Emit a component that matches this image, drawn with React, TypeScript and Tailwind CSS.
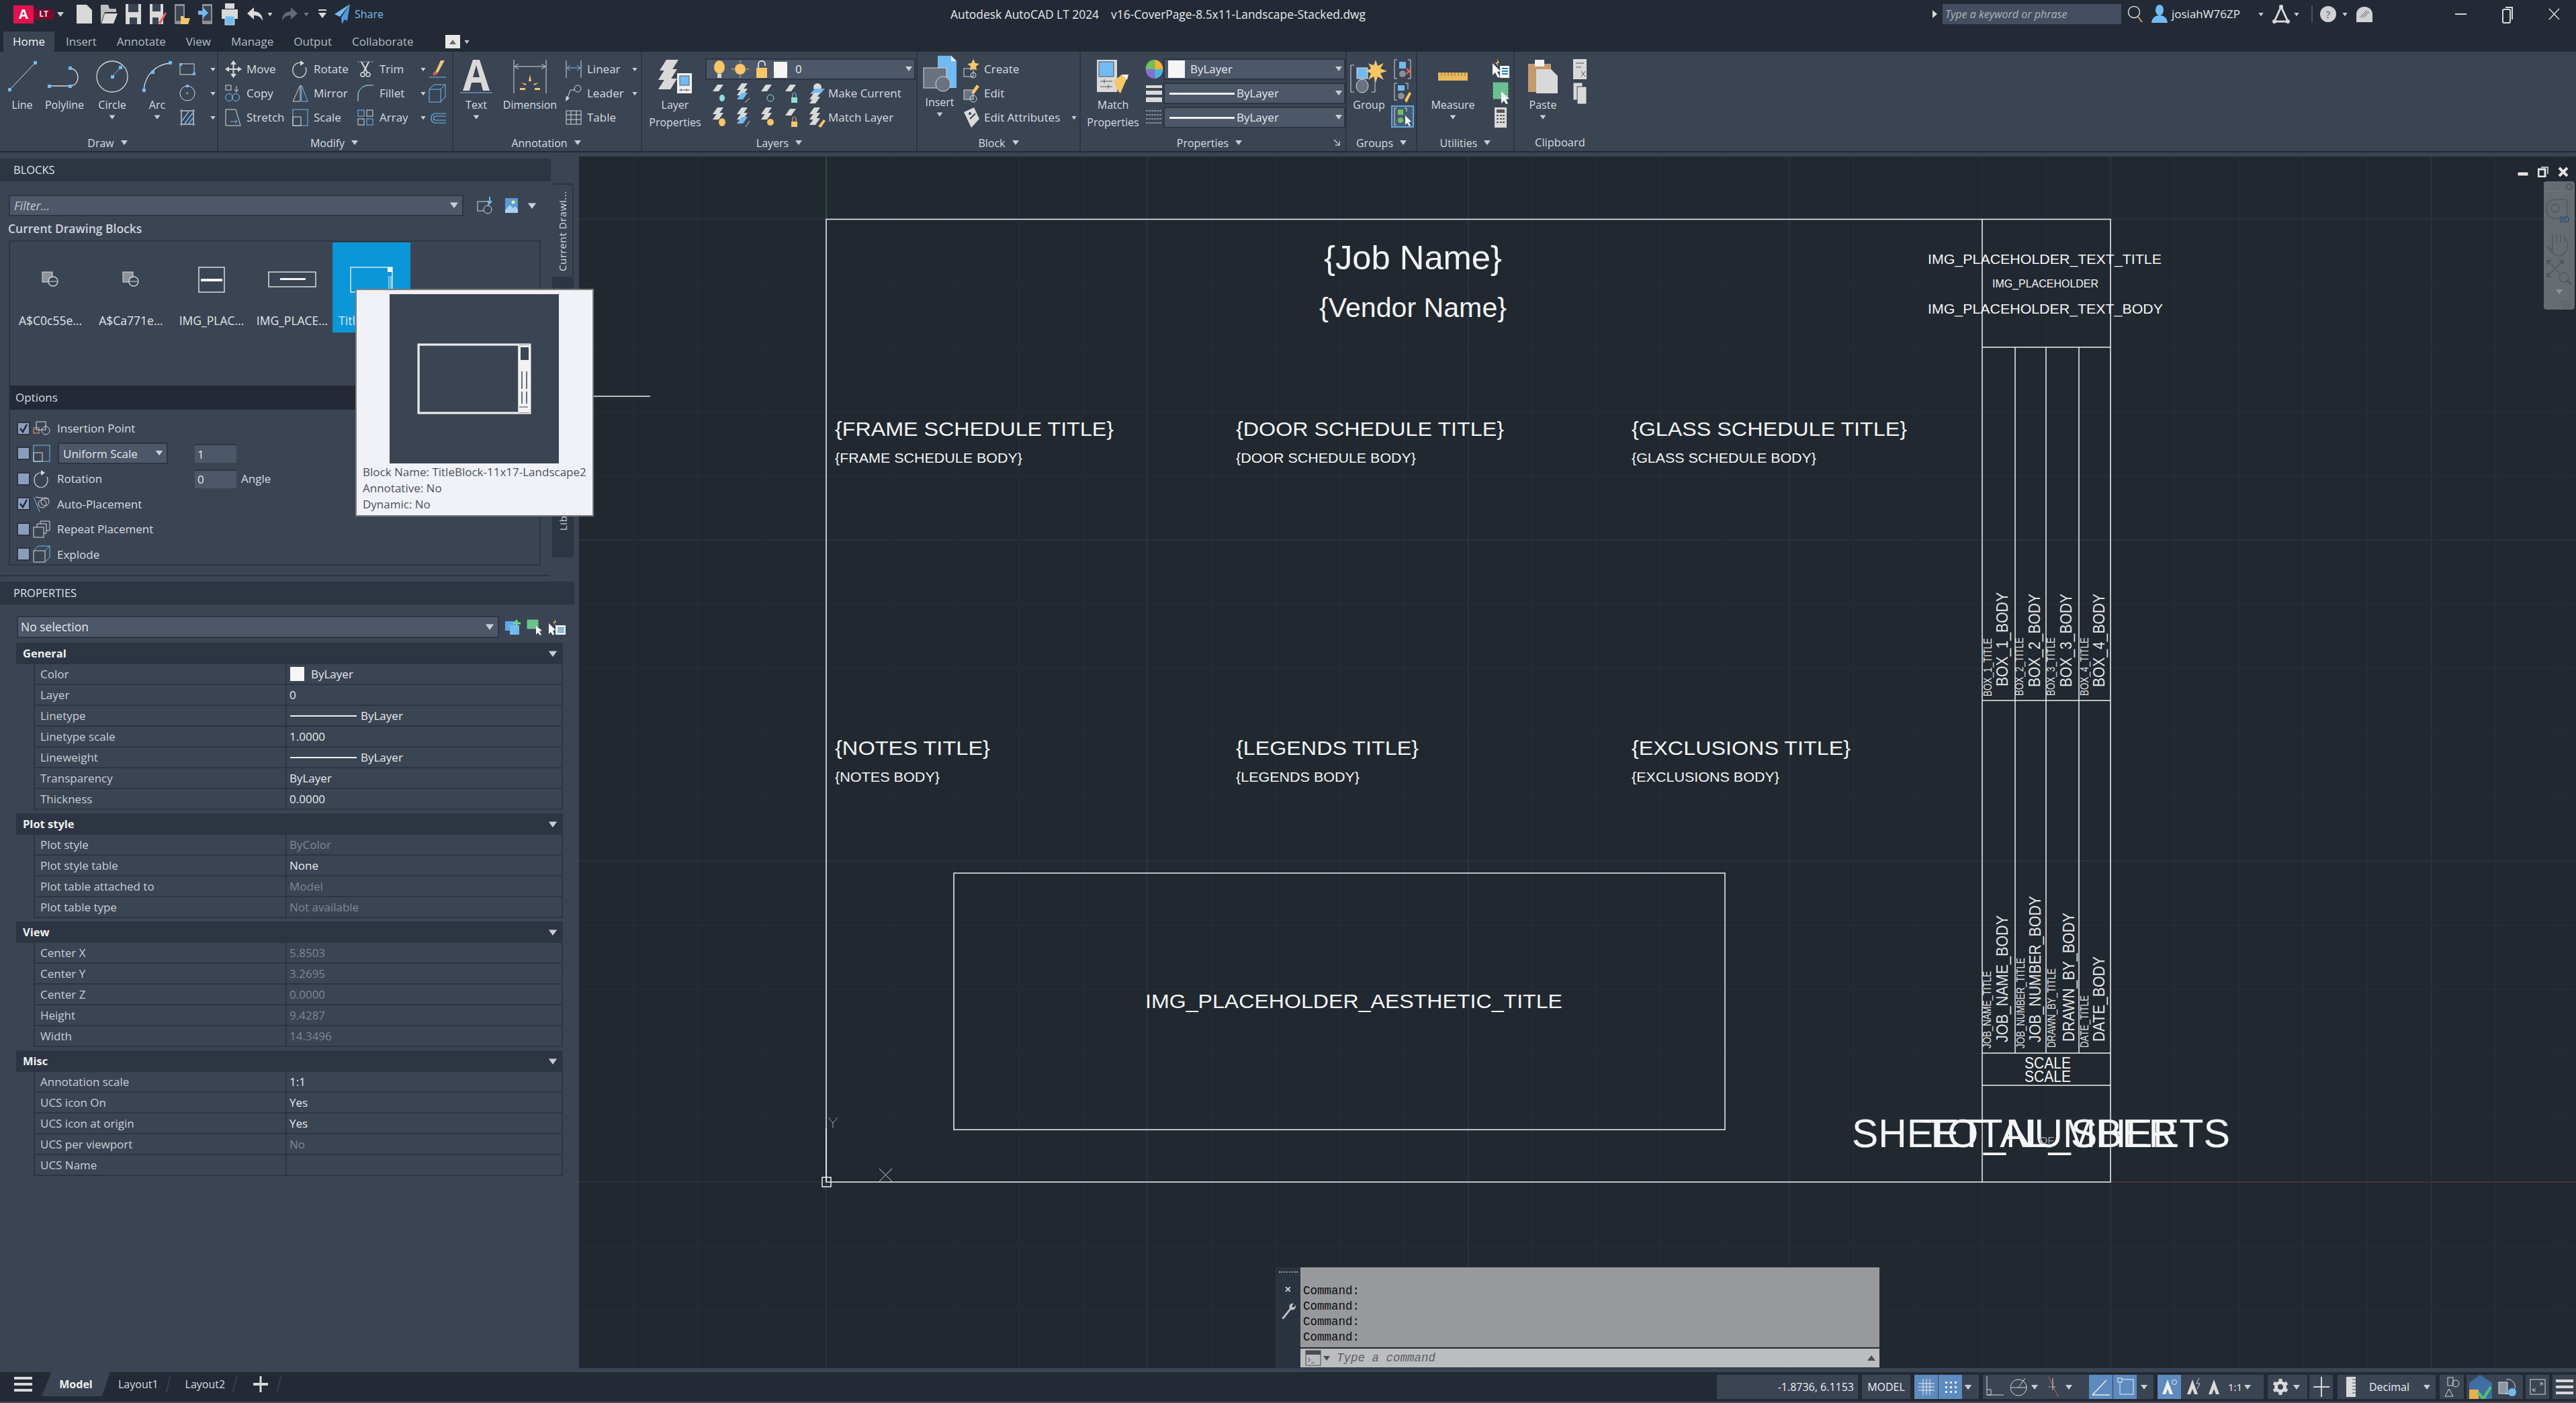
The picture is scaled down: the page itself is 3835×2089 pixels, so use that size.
import type { ReactNode } from "react"

const G = "#d9d9d9"
const B = "#72bbf2"
const Y = "#f6c667"

function Ic({ w, h, children, className }: { w: number; h: number; children?: ReactNode; className?: string }) {
  return (
    <svg width={w} height={h} viewBox={`0 0 ${w} ${h}`} fill="none" className={className}>
      {children}
    </svg>
  )
}

function Arrow({ className }: { className?: string }) {
  return (
    <svg width="10" height="7" viewBox="0 0 10 7" className={className}>
      <polygon points="0,0 10,0 5,7" fill="#c9ced6" />
    </svg>
  )
}

// ---- quick access toolbar icons
const Sheet = ({ fill = G }: { fill?: string }) => <polygon points="1,2 16,2 24,10 24,30 1,30" fill={fill} />
const qat = [
  <Ic w={25} h={32} key="new"><Sheet /></Ic>,
  <Ic w={26} h={32} key="open"><polygon points="1,2 12,2 14,8 24,8 24,13 7,13 1,30" fill="#bdbdbd" /><polygon points="7,15 26,15 20,30 2,30" fill={G} /></Ic>,
  <Ic w={25} h={34} key="save"><rect x="1" y="2" width="23" height="30" fill={G} /><rect x="5" y="2" width="15" height="12" fill="#3b4453" /><rect x="7" y="22" width="11" height="10" fill="#3b4453" /></Ic>,
  <Ic w={26} h={34} key="saveas"><rect x="1" y="2" width="20" height="30" fill={G} /><rect x="5" y="2" width="12" height="11" fill="#3b4453" /><rect x="5" y="22" width="9" height="10" fill="#3b4453" /><path d="M14 30 L24 14 L26 16 L17 32 Z" fill="#e8655a" /></Ic>,
  <Ic w={24} h={34} key="cloudopen"><rect x="1" y="2" width="15" height="30" rx="1" fill="#8c8f94" /><rect x="3" y="5" width="11" height="22" fill="#3b4453" /><polygon points="10,20 14,20 16,23 24,23 21,32 10,32" fill={Y} /></Ic>,
  <Ic w={24} h={34} key="cloudsave"><rect x="7" y="2" width="15" height="30" rx="1" fill="#8c8f94" /><rect x="9" y="5" width="11" height="22" fill="#3b4453" /><polygon points="1,12 8,12 8,7 16,15 8,23 8,18 1,18" fill={B} /></Ic>,
  <Ic w={26} h={34} key="plot"><rect x="6" y="1" width="14" height="8" fill={G} /><rect x="1" y="10" width="24" height="14" fill={G} /><rect x="6" y="20" width="14" height="13" fill={B} stroke={G} /></Ic>,
]

function TitleBar() {
  return (
    <div className="flex h-[47px] items-center bg-[#232a35] pb-[5px]">
      <div className="relative ml-[20px] h-[27px] w-[60px]">
        <div className="absolute left-[30px] top-[6px] flex h-[15px] w-[30px] items-center justify-center bg-[#7c0a2e] text-[12px] font-bold leading-none text-[#f3d9e0]">LT</div>
        <div className="absolute left-0 top-0 flex h-[27px] w-[30px] items-center justify-center bg-[#e3114f] text-[20px] font-bold leading-none text-white">A</div>
      </div>
      <Arrow className="ml-[5px]" />
      <div className="ml-[18px] flex items-center gap-[11px]">
        {qat}
      </div>
      <Ic w={26} h={22} className="ml-[12px]"><path d="M11 1 L1 10 L11 19 V13 C17 13 21 15 24 21 C24 12 19 7 11 7 Z" fill={G} /></Ic>
      <Arrow className="ml-[4px] scale-75" />
      <Ic w={26} h={22} className="ml-[11px]"><path d="M15 1 L25 10 L15 19 V13 C9 13 5 15 2 21 C2 12 7 7 15 7 Z" fill="#636a75" /></Ic>
      <Arrow className="ml-[7px] scale-75 opacity-50" />
      <Ic w={14} h={16} className="ml-[12px]"><rect x="1" y="1" width="12" height="2" fill={G} /><polygon points="1,6 13,6 7,14" fill={G} /></Ic>
      <Ic w={25} h={32} className="ml-[10px]"><polygon points="24,1 1,16 9,20 24,1" fill={B} /><polygon points="24,1 11,21 12,31 16,24 20,26" fill="#4f9bdb" /></Ic>
      <span className="ml-[6px] w-[44px] text-[16px] text-[#7cbdf0]">Share</span>
      <div className="ml-[843px] w-[640px] whitespace-pre text-[17.4px] text-[#e6e9ed]">Autodesk AutoCAD LT 2024    v16-CoverPage-8.5x11-Landscape-Stacked.dwg</div>
      <svg width="7" height="12" viewBox="0 0 7 12" className="ml-[822px]"><polygon points="0,0 7,6 0,12" fill={G} /></svg>
      <div className="ml-[8px] flex h-[30px] w-[266px] items-center bg-[#454e60] pl-[4px] text-[16px] italic text-[#aeb4bd]">Type a keyword or phrase</div>
      <Ic w={24} h={28} className="ml-[9px]"><circle cx="10" cy="11" r="8.5" stroke={G} strokeWidth="1.5" /><line x1="16" y1="18" x2="22" y2="26" stroke="#d99a5b" strokeWidth="2" /></Ic>
      <Ic w={26} h={28} className="ml-[11px]"><ellipse cx="13" cy="8" rx="6" ry="8" fill={B} /><path d="M1 27 C2 18 8 16 13 16 C18 16 24 18 25 27 Z" fill={B} /></Ic>
      <span className="ml-[5px] w-[128px] text-[17px] text-[#e6e9ed]">josiahW76ZP</span>
      <Arrow className="scale-75" />
      <Ic w={26} h={30} className="ml-[12px]"><path d="M13 4 L3 26 M13 4 L23 26 M3 26 H23" stroke={G} strokeWidth="3" /><circle cx="13" cy="4" r="3" fill={G} /><circle cx="3" cy="26" r="3" fill={G} /><circle cx="23" cy="26" r="3" fill={G} /></Ic>
      <Arrow className="ml-[5px] scale-75" />
      <div className="ml-[17px] h-[26px] w-[2px] bg-[#4a5362]" />
      <div className="ml-[11px] flex h-[24px] w-[24px] items-center justify-center rounded-full bg-[#cfd1d4] text-[15px] text-[#555]">?</div>
      <Arrow className="ml-[8px] scale-75" />
      <Ic w={24} h={24} className="ml-[12px]"><path d="M12 1 C19 1 24 6 24 12 V24 H0 V12 C0 6 5 1 12 1 Z" fill="#cfd1d4" /><path d="M5 17 L15 7 M8 17 L18 7 M11 17 L19 9" stroke="#666" /></Ic>
      <div className="ml-[123px] h-[2px] w-[17px] bg-[#d5d7da]" />
      <Ic w={17} h={28} className="ml-[53px]"><rect x="1" y="7" width="11" height="20" rx="2" stroke={G} strokeWidth="2" /><path d="M5 4 H15 V22" stroke={G} strokeWidth="2" /></Ic>
      <Ic w={17} h={18} className="ml-[52px]"><path d="M1 1 L16 17 M16 1 L1 17" stroke={G} strokeWidth="1.5" /></Ic>
    </div>
  )
}

function Tabs() {
  const rest = ["Insert", "Annotate", "View", "Manage", "Output", "Collaborate"]
  return (
    <div className="flex h-[30px] items-stretch bg-[#232a35] text-[17px]">
      <div className="ml-[5px] flex w-[76px] items-center justify-center bg-[#3b4453] text-[#f0f2f4]">Home</div>
      <div className="ml-[17px] flex items-center gap-[30px] text-[#b4bbc5]">
        {rest.map((t) => <span key={t}>{t}</span>)}
      </div>
      <div className="ml-[47px] flex items-center">
        <div className="flex h-[20px] w-[22px] items-center justify-center bg-[#e8e8e8]"><svg width="10" height="7" viewBox="0 0 10 7"><polygon points="0,7 10,7 5,0" fill="#6a6a6a" /></svg></div>
        <Arrow className="ml-[5px] scale-75" />
      </div>
    </div>
  )
}

function Panel({ w, label, children, launcher, labelClass }: { w: string; label: string; children: ReactNode; launcher?: boolean; labelClass?: string }) {
  return (
    <div className={`relative flex h-full flex-col border-r-2 border-[#2d3542] ${w}`}>
      <div className="flex h-[123px] pt-[8px]">{children}</div>
      <div className={`flex h-[25px] items-center justify-center gap-[10px] text-[16px] text-[#d7dbe0] ${labelClass ?? ""}`}>
        <span>{label}</span>
        <Arrow />
      </div>
      {launcher && (
        <svg width="10" height="10" viewBox="0 0 10 10" className="absolute bottom-[8px] right-[8px]"><path d="M1 1 L9 9 M9 3 V9 H3" stroke="#c9ced6" strokeWidth="1.5" /></svg>
      )}
    </div>
  )
}

function Large({ w, icon, label, arrow }: { w: string; icon: ReactNode; label: string[]; arrow?: boolean }) {
  return (
    <div className={`flex flex-col items-center ${w}`}>
      <div className="flex h-[58px] items-center justify-center">{icon}</div>
      {label.map((l) => (
        <span key={l} className="whitespace-nowrap text-[16px] leading-[26px] text-[#d7dbe0]">{l}</span>
      ))}
      {arrow && <Arrow className="mt-[2px] scale-90" />}
    </div>
  )
}

function Small({ icon, label, iconW, w, arrow }: { icon: ReactNode; label?: string; iconW: string; w?: string; arrow?: boolean }) {
  return (
    <div className={`flex h-[36px] items-center ${w ?? ""}`}>
      <div className={`flex shrink-0 items-center ${iconW}`}>{icon}</div>
      {label && <span className="whitespace-nowrap text-[17px] text-[#d7dbe0]">{label}</span>}
      {arrow && <Arrow className="ml-auto scale-75" />}
    </div>
  )
}

const sq = (x: number, y: number, s = 5) => <rect x={x} y={y} width={s} height={s} fill={B} />

function Combo({ children, w }: { children: ReactNode; w: string }) {
  return (
    <div className={`relative flex h-[32px] items-center border-2 border-[#2d3542] bg-[#4c5769] text-[17px] text-[#e6e9ed] ${w}`}>
      {children}
      <Arrow className="absolute right-[3px] top-[10px]" />
    </div>
  )
}

const LayerSlab = ({ y = 0 }: { y?: number }) => <polygon points={`5,${y + 10} 12,${y} 21,${y} 14,${y + 10}`} fill={G} />

function DrawPanel() {
  return (
    <Panel w="w-[325px]" label="Draw" labelClass="pr-[3px]">
      <div className="flex pl-[4px]">
        <Large w="w-[58px]" label={["Line"]} icon={<Ic w={48} h={48}><line x1="6" y1="43" x2="43" y2="4" stroke={G} />{sq(3, 41)}{sq(41, 1)}</Ic>} />
        <Large w="w-[68px]" label={["Polyline"]} icon={<Ic w={52} h={34}><path d="M3 31 H34 C50 31 50 5 34 5" stroke={G} strokeWidth="1.3" />{sq(1, 29)}{sq(32, 29)}{sq(32, 2)}</Ic>} />
        <Large w="w-[74px]" label={["Circle"]} arrow icon={<Ic w={50} h={50}><circle cx="25" cy="25" r="23" stroke={G} strokeWidth="1.3" /><line x1="25" y1="25" x2="38" y2="11" stroke={B} />{sq(23, 23)}{sq(35, 9)}</Ic>} />
        <Large w="w-[60px]" label={["Arc"]} arrow icon={<Ic w={46} h={48}><path d="M3 44 C5 22 20 6 43 4" stroke={G} strokeWidth="1.3" />{sq(1, 42)}{sq(14, 15)}{sq(40, 1)}</Ic>} />
      </div>
      <div className="ml-[2px] flex w-[56px] flex-col">
        <Small iconW="w-[36px]" arrow icon={<Ic w={26} h={20}><rect x="2" y="2" width="21" height="16" stroke={G} />{sq(21, 15, 4)}{sq(1, 1, 4)}</Ic>} />
        <Small iconW="w-[36px]" arrow icon={<Ic w={26} h={26}><circle cx="13" cy="13" r="11" stroke={G} /><rect x="11" y="0" width="4" height="4" fill={B} /><rect x="11.5" y="11.5" width="2.5" height="2.5" fill={B} /></Ic>} />
        <Small iconW="w-[36px]" arrow icon={<Ic w={26} h={26}><rect x="4" y="3" width="18" height="20" stroke={G} /><path d="M5 18 L15 4 M9 22 L21 6 M15 22 L21 14" stroke={B} strokeWidth="1.5" /><path d="M1 3 H25 M1 23 H25 M4 0 V26 M22 0 V26" stroke={G} strokeWidth="0.6" /></Ic>} />
      </div>
    </Panel>
  )
}

function ModifyPanel() {
  return (
    <Panel w="w-[350px]" label="Modify" labelClass="pr-[3px]">
      <div className="ml-[10px] flex w-[100px] flex-col">
        <Small iconW="w-[32px]" label="Move" icon={<Ic w={25} h={26}><path d="M12.5 1 V25 M1 13 H24" stroke={G} strokeWidth="2" /><polygon points="12.5,0 8,6 17,6" fill={G} /><polygon points="12.5,26 8,20 17,20" fill={G} /><polygon points="0,13 6,9 6,17" fill={G} /><polygon points="25,13 19,9 19,17" fill={G} /></Ic>} />
        <Small iconW="w-[32px]" label="Copy" icon={<Ic w={25} h={26}><rect x="1" y="1" width="8" height="7" stroke={G} /><circle cx="6" cy="19" r="5.5" stroke={B} /><circle cx="16" cy="19" r="5.5" stroke={B} /><path d="M17 2 V10 M14 7 L17 11 L20 7" stroke={G} /></Ic>} />
        <Small iconW="w-[32px]" label="Stretch" icon={<Ic w={25} h={26}><path d="M1 1 H16 L23 25 H1 Z" stroke={G} /><path d="M8 19 H18 M15 16 L18 19 L15 22" stroke={B} /></Ic>} />
      </div>
      <div className="flex w-[97px] flex-col">
        <Small iconW="w-[32px]" label="Rotate" icon={<Ic w={24} h={26}><path d="M14 4 A10 11 0 1 0 20 10" stroke={G} strokeWidth="1.3" /><polygon points="12,0 18,4 12,8" fill={G} /></Ic>} />
        <Small iconW="w-[32px]" label="Mirror" icon={<Ic w={24} h={26}><polygon points="1,25 12,1 12,25" stroke={G} /><polygon points="14,1 23,25 14,25" stroke={B} /></Ic>} />
        <Small iconW="w-[32px]" label="Scale" icon={<Ic w={24} h={26}><rect x="1" y="1" width="22" height="24" stroke={B} /><rect x="1" y="12" width="12" height="13" stroke={G} /></Ic>} />
      </div>
      <div className="flex w-[103px] flex-col">
        <Small iconW="w-[33px]" label="Trim" arrow icon={<Ic w={24} h={26}><line x1="0" y1="2" x2="24" y2="2" stroke={B} strokeDasharray="3 1" /><path d="M6 2 L15 18 M17 2 L9 18" stroke={G} strokeWidth="2" /><circle cx="8" cy="21" r="3" stroke={G} strokeWidth="1.5" /><circle cx="16" cy="21" r="3" stroke={G} strokeWidth="1.5" /></Ic>} />
        <Small iconW="w-[33px]" label="Fillet" arrow icon={<Ic w={24} h={26}><path d="M1 25 V16 C1 8 8 1 16 1 H24" stroke={G} /><path d="M1 16 C1 8 8 1 16 1" stroke={B} /></Ic>} />
        <Small iconW="w-[33px]" label="Array" arrow icon={<Ic w={24} h={24}><rect x="1" y="1" width="9" height="9" stroke={B} /><rect x="14" y="1" width="9" height="9" stroke={G} /><rect x="1" y="14" width="9" height="9" stroke={G} /><rect x="14" y="14" width="9" height="9" stroke={B} /></Ic>} />
      </div>
      <div className="ml-[3px] flex flex-col">
        <Small iconW="w-[26px]" icon={<Ic w={26} h={26}><polygon points="18,0 24,0 14,18 9,20" fill="#e9c77c" /><polygon points="9,16 14,20 8,23 6,20" fill="#dc5b4f" /><line x1="1" y1="25" x2="26" y2="25" stroke={B} /></Ic>} />
        <Small iconW="w-[26px]" icon={<Ic w={26} h={28}><path d="M1 8 H18 V27 H1 Z M1 8 L8 1 H25 V19 L18 27 M18 8 L25 1" stroke={B} /></Ic>} />
        <Small iconW="w-[26px]" icon={<Ic w={26} h={20}><path d="M26 4 H10 C2 4 2 18 10 18 H26 M26 8 H10 C7 8 7 14 10 14 H26" stroke={B} strokeWidth="1.2" /></Ic>} />
      </div>
    </Panel>
  )
}

function AnnotationPanel() {
  return (
    <Panel w="w-[281px]" label="Annotation" labelClass="pr-[3px]">
      <Large w="w-[68px]" label={["Text"]} arrow icon={<Ic w={48} h={50}><path d="M19 0 H29 L44 46 H34 L31 34 H17 L14 46 H4 Z M19 26 H29 L24 8 Z" fill={G} fillRule="evenodd" /><line x1="0" y1="49" x2="48" y2="49" stroke={B} /></Ic>} />
      <Large w="w-[92px]" label={["Dimension"]} icon={<Ic w={50} h={50}><path d="M1 0 V50 M49 0 V50" stroke={G} /><path d="M3 10 H47" stroke={G} /><path d="M8 6 L2 10 L8 14 M42 6 L48 10 L42 14" stroke={G} /><path d="M25 22 L23 32 H27 Z M12 34 L20 36 L18 38 Z M38 34 L30 36 L32 38 Z M10 42 H18 V45 H10 Z M32 42 H40 V45 H32 Z" fill={Y} /></Ic>} />
      <div className="ml-[7px] flex w-[108px] flex-col">
        <Small iconW="w-[32px]" label="Linear" arrow icon={<Ic w={24} h={26}><path d="M1 0 V26 M23 0 V26" stroke={G} /><path d="M3 11 H21 M7 7 L2 11 L7 15 M17 7 L22 11 L17 15" stroke={B} /></Ic>} />
        <Small iconW="w-[32px]" label="Leader" arrow icon={<Ic w={24} h={26}><circle cx="18" cy="6" r="5" stroke={G} /><path d="M14 8 L7 8 L2 22" stroke={G} /><polygon points="0,25 1,17 6,20" fill={G} /></Ic>} />
        <Small iconW="w-[32px]" label="Table" icon={<Ic w={24} h={22}><rect x="1" y="1" width="22" height="20" stroke={G} /><path d="M1 7 H23 M1 14 H23 M8 1 V21 M16 1 V21" stroke={G} /></Ic>} />
      </div>
    </Panel>
  )
}

const smallLayer = (glyph: ReactNode, k: string) => (
  <Ic w={30} h={30} key={k}><LayerSlab y={2} />{glyph}</Ic>
)

function LayersPanel() {
  return (
    <Panel w="w-[410px]" label="Layers">
      <div className="pl-[4px]">
        <Large w="w-[90px]" label={["Layer", "Properties"]} icon={<Ic w={50} h={50}><polygon points="12,0 30,0 20,16 2,16" fill={G} /><polygon points="10,14 28,14 18,30 0,30" fill={G} /><polygon points="10,28 28,28 18,44 0,44" fill={G} /><rect x="28" y="20" width="22" height="30" fill="#f0f0f0" /><rect x="32" y="24" width="14" height="14" fill={B} stroke="#555" /><path d="M34 43 V47 M42 43 V47 M31 45 H47" stroke="#555" /></Ic>} />
      </div>
      <div className="flex w-[313px] flex-col">
        <Combo w="w-[313px] mt-[2px] mb-[2px]">
          <Ic w={120} h={28} className="ml-[6px]"><ellipse cx="13" cy="11" rx="8" ry="10" fill={Y} /><rect x="10" y="21" width="6" height="6" fill={G} /><circle cx="44" cy="14" r="8" fill={Y} /><path d="M44 1 V5 M44 23 V27 M31 14 H35 M53 14 H57" stroke={Y} /><rect x="68" y="12" width="16" height="15" fill={Y} /><path d="M71 12 V7 C71 0 81 0 81 7 V9" stroke={G} strokeWidth="2" /><rect x="94" y="3" width="20" height="24" fill="#f5f5f5" /></Ic>
          <span className="ml-[6px]">0</span>
        </Combo>
        <div className="flex h-[36px] items-center pl-[6px]">
          {smallLayer(<ellipse cx="19" cy="22" rx="4" ry="5" fill="#8fe0e0" />, "a")}
          <span className="w-[6px]" />
          <Ic w={30} h={30}><LayerSlab y={0} /><LayerSlab y={8} /><polygon points="5,24 12,14 21,14 14,24" fill={B} /><path d="M17 29 L24 22" stroke={G} /></Ic>
          <span className="w-[6px]" />
          {smallLayer(<circle cx="19" cy="22" r="5" stroke="#8fe0e0" />, "c")}
          <span className="w-[6px]" />
          {smallLayer(<g><rect x="14" y="21" width="9" height="8" fill="#8fe0e0" /><path d="M16 21 V17 C16 13 21 13 21 17 V21" stroke="#8fe0e0" /></g>, "d")}
          <span className="w-[6px]" />
          <Ic w={30} h={30}><circle cx="17" cy="6" r="6" fill={G} /><polygon points="6,16 13,8 28,8 21,16" fill={B} /><LayerSlab y={14} /><LayerSlab y={20} /></Ic>
          <span className="ml-[3px] whitespace-nowrap text-[17px] text-[#d7dbe0]">Make Current</span>
        </div>
        <div className="flex h-[36px] items-center pl-[6px]">
          <Ic w={30} h={30}><LayerSlab y={0} /><LayerSlab y={8} /><ellipse cx="19" cy="22" rx="5" ry="6" fill={Y} /></Ic>
          <span className="w-[6px]" />
          <Ic w={30} h={30}><LayerSlab y={0} /><LayerSlab y={8} /><polygon points="5,24 12,14 21,14 14,24" fill={B} /><path d="M18 29 L24 20" stroke={G} /></Ic>
          <span className="w-[6px]" />
          <Ic w={30} h={30}><LayerSlab y={0} /><LayerSlab y={8} /><circle cx="19" cy="22" r="5" fill={Y} /></Ic>
          <span className="w-[6px]" />
          {smallLayer(<g><rect x="14" y="21" width="9" height="8" fill={Y} /><path d="M16 21 V17 C16 13 21 13 21 17 V21" stroke={Y} /></g>, "h")}
          <span className="w-[6px]" />
          <Ic w={30} h={30}><LayerSlab y={0} /><LayerSlab y={8} /><LayerSlab y={16} /><polygon points="18,28 26,18 29,20 22,30" fill={Y} /></Ic>
          <span className="ml-[3px] whitespace-nowrap text-[17px] text-[#d7dbe0]">Match Layer</span>
        </div>
      </div>
    </Panel>
  )
}

function BlockPanel() {
  return (
    <Panel w="w-[243px]" label="Block">
      <div className="-mt-[4px]">
        <Large w="w-[66px]" label={["Insert"]} arrow icon={<Ic w={50} h={54}><polygon points="22,0 42,0 50,8 50,48 22,48" fill={B} /><polygon points="42,0 50,8 42,8" fill="#f0f0f0" /><rect x="1" y="18" width="34" height="30" fill="#6a7280" stroke={G} /><circle cx="30" cy="42" r="11" fill="#6a7280" stroke={G} /></Ic>} />
      </div>
      <div className="ml-[2px] flex w-[170px] flex-col">
        <Small iconW="w-[31px]" label="Create" icon={<Ic w={24} h={30}><polygon points="15,0 18,6 24,7 19,11 20,17 15,14 10,17 11,11 6,7 12,6" fill={Y} /><rect x="1" y="14" width="14" height="12" stroke={G} /><circle cx="15" cy="24" r="4" stroke={G} /></Ic>} />
        <Small iconW="w-[31px]" label="Edit" icon={<Ic w={24} h={30}><rect x="1" y="10" width="14" height="14" fill="#6a7280" stroke={G} /><circle cx="15" cy="23" r="5" stroke={G} /><path d="M12 14 L20 2 L24 5 L16 16 Z" fill={Y} /></Ic>} />
        <Small iconW="w-[31px]" label="Edit Attributes" arrow icon={<Ic w={24} h={32}><path d="M1 8 L16 1 L24 18 L12 31 Z" fill={G} /><circle cx="10" cy="10" r="2" fill="#3b4453" /><path d="M10 18 L18 10" stroke="#3b4453" strokeWidth="2" /></Ic>} />
      </div>
    </Panel>
  )
}

function PropertiesPanel() {
  return (
    <Panel w="w-[396px]" label="Properties" launcher labelClass="pr-[11px]">
      <Large w="w-[96px]" label={["Match", "Properties"]} icon={<Ic w={50} h={50}><rect x="1" y="0" width="30" height="48" fill={G} /><rect x="4" y="3" width="22" height="22" fill={B} stroke="#555" /><path d="M6 32 H24 M6 40 H24 M12 29 V35 M18 37 V43" stroke="#555" /><polygon points="26,32 38,22 48,22 36,50 32,46" fill={Y} /><path d="M38 22 L48 22 L46 30" fill="#f0f0f0" /></Ic>} />
      <div className="flex flex-col">
        <div className="flex h-[36px] items-center">
          <svg width="27" height="28" viewBox="0 0 26 28" className="shrink-0">
            <path d="M13 14 L13 0 A13 14 0 0 1 26 14 Z" fill="#f2b23a" />
            <path d="M13 14 L26 14 A13 14 0 0 1 13 28 Z" fill="#4fb3d9" />
            <path d="M13 14 L13 28 A13 14 0 0 1 0 14 Z" fill="#8a6fd1" />
            <path d="M13 14 L0 14 A13 14 0 0 1 13 0 Z" fill="#6fbf5b" />
          </svg>
          <Combo w="w-[271px]"><span className="ml-[5px] h-[26px] w-[25px] bg-[#f5f5f5]" /><span className="ml-[8px]">ByLayer</span></Combo>
        </div>
        <div className="flex h-[36px] items-center">
          <Ic w={27} h={26} className="shrink-0"><rect x="1" y="1" width="24" height="4" fill={G} /><rect x="1" y="9" width="24" height="6" fill={G} /><rect x="1" y="19" width="24" height="7" fill={G} /></Ic>
          <Combo w="w-[271px]"><span className="ml-[7px] h-[3px] w-[97px] bg-[#f0f0f0]" /><span className="ml-[3px]">ByLayer</span></Combo>
        </div>
        <div className="flex h-[36px] items-center">
          <Ic w={27} h={26} className="shrink-0"><path d="M1 3 H25 M1 9 H25 M1 15 H25 M1 21 H25" stroke={G} strokeDasharray="3 1" /></Ic>
          <Combo w="w-[271px]"><span className="ml-[7px] h-[3px] w-[97px] bg-[#f0f0f0]" /><span className="ml-[3px]">ByLayer</span></Combo>
        </div>
      </div>
    </Panel>
  )
}

function GroupsPanel() {
  return (
    <Panel w="w-[105px]" label="Groups">
      <div className="ml-[2px]">
        <Large w="w-[62px]" label={["Group"]} icon={<Ic w={56} h={50}><path d="M6 8 H1 V48 H6 M32 8 H37 V48 H32" stroke={G} /><rect x="10" y="12" width="16" height="16" fill={B} stroke={G} /><ellipse cx="18" cy="39" rx="9" ry="10" fill="#6a7280" stroke={G} /><polygon points="38,0 41,9 50,5 45,13 55,17 45,20 50,30 41,25 38,34 35,25 27,30 31,20 23,17 31,13 27,5 35,9" fill={Y} /></Ic>} />
      </div>
      <div className="ml-[1px] flex w-[36px] flex-col items-center">
        <div className="flex h-[36px] items-center"><Ic w={26} h={30}><path d="M5 1 H1 V29 H5 M21 1 H25 V29 H21" stroke={G} /><rect x="8" y="4" width="10" height="10" fill={B} /><circle cx="13" cy="22" r="5" fill="#8a8f98" /><path d="M19 14 L26 22 M26 14 L19 22" stroke="#e8655a" strokeWidth="2" /></Ic></div>
        <div className="flex h-[36px] items-center"><Ic w={26} h={32}><path d="M5 1 H1 V26 H5 M17 1 H21 V10" stroke={G} /><rect x="6" y="4" width="10" height="8" fill={B} /><circle cx="11" cy="20" r="5" fill="#8a8f98" /><polygon points="16,26 23,14 26,16 19,30" fill={Y} /></Ic></div>
        <div className="flex h-[33px] w-[34px] items-center justify-center border-2 border-[#5fa8e0] bg-[#465a75]"><Ic w={26} h={28}><path d="M4 1 H1 V26 H4 M16 1 H19 V6" stroke={G} /><rect x="6" y="3" width="8" height="8" fill="#6fbf5b" /><circle cx="10" cy="19" r="4" fill="#6fbf5b" /><polygon points="17,12 17,26 20,23 23,28 25,27 22,22 26,21" fill="#f5f5f5" /></Ic></div>
      </div>
    </Panel>
  )
}

function UtilitiesPanel() {
  return (
    <Panel w="w-[145px]" label="Utilities">
      <Large w="w-[106px]" label={["Measure"]} arrow icon={<Ic w={44} h={12}><rect x="0" y="0" width="44" height="12" fill="#e8b95c" /><path d="M5 0 V5 M10 0 V5 M15 0 V5 M20 0 V5 M25 0 V5 M30 0 V5 M35 0 V5 M40 0 V5" stroke="#8a6a2a" /></Ic>} />
      <div className="flex w-[36px] flex-col items-center">
        <div className="flex h-[36px] items-center"><Ic w={26} h={30}><polygon points="1,6 1,24 5,20 9,28 12,26 8,19 13,18" fill="#f5f5f5" /><polygon points="8,0 11,6 8,6 10,11 5,5 8,5" fill={Y} /><rect x="12" y="10" width="14" height="18" fill="#f5f5f5" /><path d="M15 14 H24 M15 18 H24 M15 22 H24" stroke="#1d7ec2" strokeWidth="2" /></Ic></div>
        <div className="flex h-[36px] items-center"><Ic w={26} h={34}><rect x="2" y="1" width="22" height="24" fill="#6cbf8e" stroke="#6fdc8e" strokeDasharray="3 2" /><polygon points="14,14 14,32 18,28 21,33 24,32 21,26 26,25" fill="#f5f5f5" /></Ic></div>
        <div className="flex h-[36px] items-center"><Ic w={20} h={30}><rect x="1" y="0" width="18" height="30" fill={G} /><rect x="4" y="3" width="12" height="5" fill="#555" /><path d="M4 12 H7 M9 12 H12 M13 12 H16 M4 17 H7 M9 17 H12 M13 17 H16 M4 22 H7 M9 22 H12 M13 22 H16" stroke="#555" strokeWidth="2" /></Ic></div>
      </div>
    </Panel>
  )
}

function ClipboardPanel() {
  return (
    <div className="flex h-full w-[140px] flex-col">
      <div className="flex h-[123px] pt-[8px]">
        <Large w="w-[84px]" label={["Paste"]} arrow icon={<Ic w={44} h={50}><rect x="0" y="6" width="34" height="42" fill="#c49a6c" /><rect x="10" y="0" width="14" height="10" fill="#f0f0f0" /><polygon points="12,14 34,14 44,24 44,50 12,50" fill={G} /></Ic>} />
        <div className="ml-[3px] flex flex-col">
          <div className="flex h-[36px] items-center"><Ic w={20} h={30}><rect x="0" y="0" width="20" height="30" fill={G} /><path d="M4 6 H16 M4 12 H12" stroke="#555" /><path d="M12 18 L18 26 M18 18 L12 26" stroke="#555" /></Ic></div>
          <div className="flex h-[36px] items-center"><Ic w={20} h={32}><rect x="0" y="0" width="14" height="26" fill={G} stroke="#3b4453" /><rect x="6" y="6" width="14" height="26" fill={G} stroke="#3b4453" /></Ic></div>
        </div>
      </div>
      <div className="flex h-[25px] items-center pl-[30px] text-[16.5px] text-[#d7dbe0]">Clipboard</div>
    </div>
  )
}

function Ribbon() {
  return (
    <div className="flex h-[148px] bg-[#3b4453]">
      <DrawPanel />
      <ModifyPanel />
      <AnnotationPanel />
      <LayersPanel />
      <BlockPanel />
      <PropertiesPanel />
      <GroupsPanel />
      <UtilitiesPanel />
      <ClipboardPanel />
    </div>
  )
}

// ---- blocks palette
const smallBlock = (
  <Ic w={26} h={28}><rect x="1" y="3" width="15" height="15" fill="#8d939c" stroke={G} /><circle cx="17" cy="17" r="7" fill="#3b4453" stroke={G} strokeWidth="1.3" /><path d="M10 17 H24" stroke={G} /></Ic>
)

const blockItems = [
  { label: "A$C0c55e...", icon: smallBlock },
  { label: "A$Ca771e...", icon: smallBlock },
  { label: "IMG_PLAC...", icon: <Ic w={40} h={39}><rect x="1" y="1" width="38" height="37" stroke="#f5f5f5" strokeWidth="1.3" /><rect x="4" y="18" width="32" height="4" fill="#f5f5f5" /></Ic> },
  { label: "IMG_PLACE...", icon: <Ic w={72} h={24}><rect x="1" y="1" width="70" height="22" stroke="#f5f5f5" strokeWidth="1.3" /><rect x="18" y="10" width="38" height="3" fill="#f5f5f5" /></Ic> },
  { label: "TitleBlock-...", icon: <Ic w={64} h={39}><rect x="1" y="1" width="62" height="37" stroke="#f5f5f5" strokeWidth="1.3" /><rect x="56" y="1" width="7" height="7" fill="#f5f5f5" /><path d="M58 14 V38 M61 14 V38" stroke="#f5f5f5" /></Ic>, selected: true },
]

const checkOn = (
  <div className="flex h-[20px] w-[20px] shrink-0 items-center justify-center border-2 border-[#2d3542] bg-[#8a9dbc]"><svg width="14" height="14" viewBox="0 0 14 14"><path d="M2 7 L6 12 L12 1" stroke="#20262f" strokeWidth="2.4" fill="none" /></svg></div>
)
const checkOff = <div className="h-[20px] w-[20px] shrink-0 border-2 border-[#2d3542] bg-[#8a9dbc]" />

function OptionRow({ on, icon, label, children }: { on?: boolean; icon: ReactNode; label?: string; children?: ReactNode }) {
  return (
    <div className="flex h-[37.5px] items-center pl-[10px]">
      {on ? checkOn : checkOff}
      <div className="ml-[4px] flex w-[36px] shrink-0 items-center">{icon}</div>
      {label && <span className="text-[17px] text-[#d7dbe0]">{label}</span>}
      {children}
    </div>
  )
}

function SmallInput({ value, w }: { value: string; w: string }) {
  return <div className={`flex h-[28px] items-center border-t-2 border-[#2d3542] bg-[#4c5769] pl-[4px] text-[17px] text-[#e6e9ed] ${w}`}>{value}</div>
}

function BlocksPanel() {
  return (
    <div className="relative flex h-[622px]">
      <div className="w-[820px]">
        <div className="flex h-[34px] items-center rounded-t-[3px] bg-[#2d3542] pl-[20px] text-[16.5px] text-[#dde1e6]">BLOCKS</div>
        <div className="ml-[13px] mt-[20px] flex h-[32px] items-center">
          <div className="relative flex h-[32px] w-[677px] items-center border-2 border-[#2d3542] bg-[#4c5769] pl-[6px] text-[18px] italic text-[#c3c9d1]">
            Filter...
            <Arrow className="absolute right-[7px] top-[10px] scale-125" />
          </div>
          <Ic w={26} h={26} className="ml-[20px]"><rect x="1" y="7" width="16" height="14" stroke={G} /><circle cx="16" cy="19" r="6" stroke={G} fill="#3b4453" /><path d="M19 0 V9 M16 6 L19 10 L22 6" stroke={B} strokeWidth="2" /></Ic>
          <Ic w={19} h={22} className="ml-[16px]"><rect x="0" y="0" width="19" height="22" fill="#5c9ad1" /><circle cx="12" cy="6" r="2.5" fill="#f6e8a0" /><polygon points="0,18 7,10 12,15 15,12 19,17 19,22 0,22" fill="#a9d2f0" /></Ic>
          <Arrow className="ml-[16px] scale-125" />
        </div>
        <div className="flex h-[36px] items-center pl-[12px] text-[17.5px] font-semibold text-[#cfd4da]">Current Drawing Blocks</div>
        <div className="ml-[13px] h-[484px] w-[792px] border-2 border-[#2d3542]">
          <div className="flex h-[214px] items-start pt-[1px]">
            {blockItems.map((b) => (
              <div key={b.label} className={b.selected ? "flex h-[134px] w-[116px] flex-col items-center overflow-hidden bg-[#0a96d8]" : "flex h-[134px] w-[120px] flex-col items-center overflow-hidden"}>
                <div className="-mb-[6px] flex h-[110px] shrink-0 items-center justify-center">{b.icon}</div>
                <span className="whitespace-nowrap text-[17.5px] leading-[24px] text-[#e2e5e9]">{b.label}</span>
              </div>
            ))}
          </div>
          <div className="flex h-[36px] items-center bg-[#232a35] pl-[8px] text-[17px] text-[#d7dbe0]">Options</div>
          <div className="pt-[9px]">
            <OptionRow on label="Insertion Point" icon={<Ic w={26} h={24}><rect x="1" y="11" width="8" height="8" stroke="#e8a27a" /><rect x="5" y="2" width="14" height="12" stroke={G} /><circle cx="19" cy="15" r="6" stroke={G} /></Ic>} />
            <OptionRow icon={<Ic w={26} h={26}><rect x="1" y="1" width="24" height="24" stroke={B} /><rect x="1" y="12" width="13" height="13" stroke={G} /></Ic>}>
              <div className="relative ml-[1px] flex h-[32px] w-[164px] items-center border-2 border-[#2d3542] bg-[#4c5769] pl-[6px] text-[17px] text-[#e2e5e9]">
                Uniform Scale
                <Arrow className="absolute right-[6px] top-[10px] scale-110" />
              </div>
              <div className="ml-[40px]"><SmallInput value="1" w="w-[62px]" /></div>
            </OptionRow>
            <OptionRow icon={<Ic w={24} h={26}><path d="M14 4 A10 11 0 1 0 21 10" stroke={G} strokeWidth="1.2" /><polygon points="12,0 18,4 12,8" fill={G} /></Ic>}>
              <span className="w-[205px] text-[17px] text-[#d7dbe0]">Rotation</span>
              <SmallInput value="0" w="w-[62px]" />
              <span className="ml-[7px] text-[17px] text-[#d7dbe0]">Angle</span>
            </OptionRow>
            <OptionRow on label="Auto-Placement" icon={<Ic w={26} h={26}><path d="M1 3 L10 25" stroke={B} /><path d="M4 3 L24 6" stroke={G} /><circle cx="14" cy="13" r="6" stroke={G} /><circle cx="18" cy="10" r="6" stroke={G} /></Ic>} />
            <OptionRow label="Repeat Placement" icon={<Ic w={26} h={26}><rect x="1" y="10" width="15" height="15" stroke={G} /><path d="M6 10 V5 H20 V19 H16 M11 5 V1 H25 V15 H20" stroke={G} /></Ic>} />
            <OptionRow label="Explode" icon={<Ic w={26} h={26}><path d="M1 8 H18 V25 H1 Z" stroke={G} /><path d="M1 8 L8 1 H25 V18 L18 25 M18 8 L25 1" stroke={B} /></Ic>} />
          </div>
        </div>
      </div>
      <div className="ml-[2px] mt-[37px] flex w-[32px] flex-col">
        <div className="flex h-[139px] items-center justify-center rounded-r-[4px] border-r-2 border-t-2 border-[#2d3542] bg-[#3b4453]">
          <span className="rotate-180 whitespace-nowrap text-[15px] tracking-[0.6px] text-[#d7dbe0] [writing-mode:vertical-rl]">Current Drawi...</span>
        </div>
        <div className="flex h-[418px] items-end justify-center rounded-r-[4px] bg-[#2d3542] pb-[40px]">
          <span className="rotate-180 whitespace-nowrap text-[15px] tracking-[0.6px] text-[#c3c9d1] [writing-mode:vertical-rl]">Libraries</span>
        </div>
      </div>
      <div className="absolute bottom-0 left-0 h-[2px] w-[818px] bg-[#2d3542]" />
    </div>
  )
}

// ---- properties palette
type Row = { k: string; v?: string; dim?: boolean; line?: boolean; swatch?: boolean }
const sections: { title: string; rows: Row[] }[] = [
  {
    title: "General",
    rows: [
      { k: "Color", v: "ByLayer", swatch: true },
      { k: "Layer", v: "0" },
      { k: "Linetype", v: "ByLayer", line: true },
      { k: "Linetype scale", v: "1.0000" },
      { k: "Lineweight", v: "ByLayer", line: true },
      { k: "Transparency", v: "ByLayer" },
      { k: "Thickness", v: "0.0000" },
    ],
  },
  {
    title: "Plot style",
    rows: [
      { k: "Plot style", v: "ByColor", dim: true },
      { k: "Plot style table", v: "None" },
      { k: "Plot table attached to", v: "Model", dim: true },
      { k: "Plot table type", v: "Not available", dim: true },
    ],
  },
  {
    title: "View",
    rows: [
      { k: "Center X", v: "5.8503", dim: true },
      { k: "Center Y", v: "3.2695", dim: true },
      { k: "Center Z", v: "0.0000", dim: true },
      { k: "Height", v: "9.4287", dim: true },
      { k: "Width", v: "14.3496", dim: true },
    ],
  },
  {
    title: "Misc",
    rows: [
      { k: "Annotation scale", v: "1:1" },
      { k: "UCS icon On", v: "Yes" },
      { k: "UCS icon at origin", v: "Yes" },
      { k: "UCS per viewport", v: "No", dim: true },
      { k: "UCS Name" },
    ],
  },
]

function PropertiesPalette() {
  return (
    <div className="mt-[8px]">
      <div className="flex h-[34px] w-[855px] items-center rounded-t-[3px] bg-[#2d3542] pl-[20px] text-[16.5px] text-[#dde1e6]">PROPERTIES</div>
      <div className="ml-[25px] mt-[17px] flex h-[33px] items-center">
        <div className="relative flex h-[33px] w-[718px] items-center border-2 border-[#2d3542] bg-[#4c5769] pl-[4px] text-[17.5px] text-[#e6e9ed]">
          No selection
          <Arrow className="absolute right-[7px] top-[11px] scale-125" />
        </div>
        <Ic w={24} h={24} className="ml-[9px]"><rect x="0" y="3" width="15" height="14" fill="#5ea8e6" /><rect x="7" y="9" width="14" height="14" fill={B} /><path d="M17 1 V11 M12 6 H23" stroke="#6fdc8e" strokeWidth="3" /></Ic>
        <Ic w={24} h={24} className="ml-[8px]"><rect x="1" y="1" width="16" height="13" fill="#6cbf8e" stroke="#6fdc8e" strokeDasharray="2 1" /><polygon points="14,10 14,23 17,20 20,24 22,23 19,18 23,17" fill="#f5f5f5" /></Ic>
        <Ic w={26} h={24} className="ml-[8px]"><polygon points="1,6 1,22 4,19 7,24 9,22 7,17 11,16" fill="#f5f5f5" /><polygon points="10,0 12,5 9,5 12,10 7,4 10,4" fill={Y} /><rect x="11" y="9" width="15" height="14" fill="#f5f5f5" /><path d="M14 13 H24 M14 16 H24 M14 19 H24" stroke="#1d7ec2" strokeWidth="1.5" /></Ic>
      </div>
      <div className="ml-[24px] mt-[7px] flex w-[814px] flex-col gap-[5px]">
        {sections.map((s) => (
          <div key={s.title}>
            <div className="flex h-[32px] items-center justify-between bg-[#2d3542] px-[10px] text-[16.5px] font-bold text-[#eef0f2]">
              {s.title}
              <Arrow className="scale-125" />
            </div>
            {s.rows.map((r) => (
              <div key={r.k} className="ml-[26px] flex h-[31px] border-b-2 border-l-2 border-r-2 border-[#2d3542] text-[17px]">
                <div className="flex w-[375px] items-center border-r-2 border-[#2d3542] pl-[8px] text-[#c9ced6]">{r.k}</div>
                <div className={r.dim ? "flex items-center pl-[4px] text-[#7f8794]" : "flex items-center pl-[4px] text-[#e8eaee]"}>
                  {r.swatch && <span className="mr-[10px] ml-[1px] h-[21px] w-[21px] bg-[#f5f5f5]" />}
                  {r.line && <span className="mr-[6px] ml-[1px] h-[2px] w-[99px] bg-[#f0f0f0]" />}
                  {r.v}
                </div>
              </div>
            ))}
          </div>
        ))}
      </div>
    </div>
  )
}

// ---- drawing canvas
const X0 = 1230
const Y0 = 1760
const STEP = 95.6
const xs = Array.from({ length: 40 }, (_, i) => i - 4).filter((i) => X0 + i * STEP > 862 && X0 + i * STEP < 3835)
const ys = Array.from({ length: 30 }, (_, i) => i - 20).filter((i) => Y0 + i * STEP > 233 && Y0 + i * STEP < 2037)

function T({ x, y, size, len, fill = "#f4f5f6", children }: { x: number; y: number; size: number; len: number; fill?: string; children: string }) {
  return (
    <text x={x} y={y + size * 0.36} fontSize={size} textLength={len} lengthAdjust="spacingAndGlyphs" fill={fill}>
      {children}
    </text>
  )
}

function V({ cx, top, bottom, size, children }: { cx: number; top: number; bottom: number; size: number; children: string }) {
  return (
    <text transform={`translate(${cx + size * 0.36} ${bottom}) rotate(-90)`} fontSize={size} textLength={bottom - top} lengthAdjust="spacingAndGlyphs" fill="#e4e6e9">
      {children}
    </text>
  )
}

const heads = [
  [1243, 638, 415, "{FRAME SCHEDULE TITLE}", 682, 279, "{FRAME SCHEDULE BODY}"],
  [1840, 638, 399, "{DOOR SCHEDULE TITLE}", 682, 268, "{DOOR SCHEDULE BODY}"],
  [2429, 638, 410, "{GLASS SCHEDULE TITLE}", 682, 275, "{GLASS SCHEDULE BODY}"],
  [1243, 1113, 231, "{NOTES TITLE}", 1157, 156, "{NOTES BODY}"],
  [1840, 1113, 272, "{LEGENDS TITLE}", 1157, 184, "{LEGENDS BODY}"],
  [2429, 1113, 326, "{EXCLUSIONS TITLE}", 1157, 220, "{EXCLUSIONS BODY}"],
] as const

const vtexts: [number, number, number, number, string][] = [
  [2980, 882, 1022, 24, "BOX_1_BODY"],
  [3028, 884, 1023, 24, "BOX_2_BODY"],
  [3075, 884, 1023, 24, "BOX_3_BODY"],
  [3124, 884, 1023, 24, "BOX_4_BODY"],
  [2959, 950, 1037, 16, "BOX_1_TITLE"],
  [3006, 949, 1036, 16, "BOX_2_TITLE"],
  [3053, 949, 1036, 16, "BOX_3_TITLE"],
  [3103, 949, 1036, 16, "BOX_4_TITLE"],
  [2980, 1363, 1552, 24, "JOB_NAME_BODY"],
  [3029, 1334, 1552, 24, "JOB_NUMBER_BODY"],
  [3079, 1359, 1551, 24, "DRAWN_BY_BODY"],
  [3124, 1424, 1551, 24, "DATE_BODY"],
  [2958, 1446, 1561, 16, "JOB_NAME_TITLE"],
  [3008, 1426, 1561, 16, "JOB_NUMBER_TITLE"],
  [3054, 1442, 1560, 16, "DRAWN_BY_TITLE"],
  [3103, 1482, 1560, 16, "DATE_TITLE"],
]

function Canvas() {
  return (
    <svg width="2973" height="1804" viewBox="862 233 2973 1804" className="block font-['Liberation_Sans',sans-serif]">
      {xs.map((i) => {
        const major = ((i % 5) + 5) % 5 === 0
        return <line key={`x${i}`} x1={X0 + i * STEP} y1={233} x2={X0 + i * STEP} y2={2037} stroke={major ? "#333c4a" : "#29313c"} />
      })}
      {ys.map((i) => {
        const major = ((i % 5) + 5) % 5 === 0
        return <line key={`y${i}`} x1={862} y1={Y0 + i * STEP} x2={3835} y2={Y0 + i * STEP} stroke={major ? "#333c4a" : "#29313c"} />
      })}
      <line x1={X0} y1={233} x2={X0} y2={326} stroke="#2e6a41" />
      <line x1={3142} y1={1760} x2={3835} y2={1760} stroke="#6a2a30" />

      <g stroke="#f0f1f2" strokeWidth="1.5">
        <rect x={1230} y={326.5} width={1912} height={1433.5} fill="none" />
        <rect x={1420} y={1300} width={1148} height={382} fill="none" />
        <line x1={2951} y1={326} x2={2951} y2={1760} />
        <line x1={2951} y1={517} x2={3142} y2={517} />
        <line x1={3000} y1={517} x2={3000} y2={1568} />
        <line x1={3046} y1={517} x2={3046} y2={1568} />
        <line x1={3095} y1={517} x2={3095} y2={1568} />
        <line x1={2951} y1={1043} x2={3142} y2={1043} />
        <line x1={2951} y1={1568} x2={3142} y2={1568} />
        <line x1={2951} y1={1616} x2={3142} y2={1616} />
        <line x1={884} y1={590} x2={968} y2={590} />
        <line x1={1230} y1={1680} x2={1230} y2={1760} />
        <rect x={1224} y={1753} width={13} height={14} fill="none" />
      </g>
      <path d="M1309 1740 L1328 1759 M1328 1740 L1309 1759" stroke="#cfd2d6" fill="none" />
      <path d="M1233 1664 L1240 1672 L1247 1664 M1240 1672 V1680" stroke="#9aa0a8" fill="none" />

      <T x={1971} y={383} size={50} len={265}>{"{Job Name}"}</T>
      <T x={1964} y={458} size={40} len={279}>{"{Vendor Name}"}</T>
      {heads.map((h) => (
        <g key={h[3]}>
          <T x={h[0]} y={h[1]} size={30} len={h[2]}>{h[3]}</T>
          <T x={h[0]} y={h[4]} size={20} len={h[5]}>{h[6]}</T>
        </g>
      ))}
      <T x={1705} y={1490} size={30} len={621}>IMG_PLACEHOLDER_AESTHETIC_TITLE</T>
      <T x={2870} y={385} size={21} len={348}>IMG_PLACEHOLDER_TEXT_TITLE</T>
      <T x={2966} y={422} size={16} len={158}>IMG_PLACEHOLDER</T>
      <T x={2870} y={459} size={21} len={350}>IMG_PLACEHOLDER_TEXT_BODY</T>
      {vtexts.map((t) => (
        <V key={t[4]} cx={t[0]} top={t[1]} bottom={t[2]} size={t[3]}>{t[4]}</V>
      ))}
      <T x={3014} y={1583} size={23} len={69}>SCALE</T>
      <T x={3014} y={1603} size={23} len={69}>SCALE</T>
      <T x={2757} y={1686} size={60} len={484}>SHEET_NUMBER</T>
      <T x={2864} y={1686} size={60} len={456}>TOTAL_SHEETS</T>
      <T x={3036} y={1698} size={15} len={22} fill="#9ca2aa">OF</T>
    </svg>
  )
}

function NavBar() {
  return (
    <div className="absolute right-[2px] top-[37px] flex h-[191px] w-[46px] flex-col items-center rounded-[4px] bg-[#666c72]">
      <div className="flex h-[16px] w-full items-center justify-end border-b border-[#70767c] pr-[2px]">
        <svg width="12" height="12" viewBox="0 0 12 12"><circle cx="6" cy="6" r="5.5" fill="#545a60" /><path d="M3.5 3.5 L8.5 8.5 M8.5 3.5 L3.5 8.5" stroke="#80868c" /></svg>
      </div>
      <Ic w={44} h={44} className="-mb-[6px] mt-[9px]"><path d="M6 26 C-1 14 4 2 18 2 H30 C34 2 34 6 34 10 V24 C34 32 28 32 20 30 H12 Z" stroke="#575d63" strokeWidth="2" /><circle cx="16" cy="15" r="6" stroke="#575d63" strokeWidth="2" /><text x="22" y="36" fontSize="12" fontWeight="700" fill="#33527d" className="font-['Liberation_Sans',sans-serif]">2D</text></Ic>
      <Ic w={36} h={36} className="mt-[14px]"><path d="M1 20 L8 26 V6 M8 14 V2 M14 14 V1 M20 14 V2 M26 14 V5 C32 14 32 22 26 30 C20 36 10 36 1 20" stroke="#575d63" strokeWidth="2" /></Ic>
      <Ic w={38} h={38} className="mt-[4px]"><path d="M2 2 L24 24 M24 2 L2 24" stroke="#575d63" strokeWidth="2" /><path d="M0 0 H8 L0 8 Z M26 0 V8 L18 0 Z M0 26 V18 L8 26 Z" fill="#50565c" /><circle cx="26" cy="26" r="7" fill="#666c72" stroke="#575d63" strokeWidth="2" /><line x1="31" y1="31" x2="37" y2="37" stroke="#50565c" strokeWidth="3" /></Ic>
      <Arrow className="mt-[6px] opacity-40" />
      <svg width="12" height="12" viewBox="0 0 12 12" className="mt-[10px] ml-[20px]"><circle cx="6" cy="6" r="5.5" stroke="#575d63" fill="none" /><line x1="1" y1="6" x2="11" y2="6" stroke="#575d63" /></svg>
    </div>
  )
}

function CommandLine() {
  return (
    <div className="absolute left-[1899px] top-[1887px] flex h-[150px] w-[899px]">
      <div className="flex w-[37px] flex-col items-center bg-[#2b333f] pt-[6px]">
        <div className="h-[2px] w-[28px] border-t-2 border-dotted border-[#9aa0a8]" />
        <span className="mt-[15px] text-[18px] font-bold leading-none text-[#c3c7cc]">×</span>
        <Ic w={24} h={24} className="mt-[12px]"><path d="M2 23 L14 8 C12 3 16 0 20 1 L17 5 L20 7 L23 3 C24 8 20 12 16 10 L5 24 Z" fill="#bfc3c8" /></Ic>
      </div>
      <div className="flex w-[862px] flex-col">
        <div className="flex h-[119px] flex-col justify-end bg-[#97999c] pb-[3px] pl-[4px] font-['Liberation_Mono',monospace] text-[17.5px] leading-[23px] text-[#0d0d0d]">
          <span>Command:</span>
          <span>Command:</span>
          <span>Command:</span>
          <span>Command:</span>
        </div>
        <div className="flex h-[30px] items-center border-t-2 border-[#232a35] bg-[#bcbdbf] pl-[7px] pr-[6px] font-['Liberation_Mono',monospace] text-[17.5px] italic text-[#5c5f63]">
          <Ic w={24} h={24}><rect x="1" y="1" width="22" height="22" stroke="#4a4d52" /><rect x="1" y="1" width="22" height="6" fill="#4a4d52" /><path d="M4 12 L8 15 L4 18 M9 19 H14" stroke="#4a4d52" /></Ic>
          <svg width="10" height="7" viewBox="0 0 10 7" className="ml-[3px]"><polygon points="0,0 10,0 5,7" fill="#4a4d52" /></svg>
          <span className="ml-[10px]">Type a command</span>
          <svg width="12" height="8" viewBox="0 0 12 8" className="ml-auto"><polygon points="0,8 12,8 6,0" fill="#4a4d52" /></svg>
        </div>
      </div>
    </div>
  )
}

function Box({ w, children, className }: { w: string; children?: ReactNode; className?: string }) {
  return <div className={`flex h-[36px] items-center bg-[#3b4453] ${w} ${className ?? ""}`}>{children}</div>
}
const BlueBtn = ({ children }: { children: ReactNode }) => (
  <div className="flex h-[36px] w-[35px] items-center justify-center bg-[#5d8abf]">{children}</div>
)

const annoIcon = (fill: string, deco: ReactNode) => (
  <Ic w={30} h={30}><path d="M12 4 L4 26 H9 L12 18 L15 26 H20 Z" fill={fill} />{deco}</Ic>
)

function StatusBar() {
  return (
    <div className="flex h-[46px] border-b-2 border-[#4a4f57] bg-[#232a35]">
      <div className="flex h-[36px] items-center">
        <Ic w={27} h={24} className="ml-[21px]"><rect x="0" y="1" width="27" height="4" fill={G} /><rect x="0" y="10" width="27" height="4" fill={G} /><rect x="0" y="19" width="27" height="4" fill={G} /></Ic>
        <div className="ml-[14px] flex h-[36px] w-[102px] items-center justify-center bg-[#3b4453] text-[16px] font-bold text-[#f0f2f4] [clip-path:polygon(14%_0,100%_0,88%_100%,0_100%)]">Model</div>
        <span className="ml-[12px] text-[16px] text-[#d7dbe0]">Layout1</span>
        <div className="ml-[14px] h-[26px] w-[1px] rotate-[14deg] bg-[#4a5362]" />
        <span className="ml-[25px] text-[16px] text-[#d7dbe0]">Layout2</span>
        <div className="ml-[14px] h-[26px] w-[1px] rotate-[14deg] bg-[#4a5362]" />
        <Ic w={22} h={24} className="ml-[27px]"><rect x="9.5" y="0" width="3" height="24" fill={G} /><rect x="0" y="10" width="22" height="4" fill={G} /></Ic>
        <div className="ml-[16px] h-[26px] w-[1px] rotate-[14deg] bg-[#4a5362]" />
      </div>
      <div className="ml-auto flex h-[36px] translate-y-[4px] items-center">
        <Box w="w-[210px]" className="justify-end pr-[6px] text-[16px] text-[#eef0f2]">-1.8736, 6.1153</Box>
        <Box w="ml-[6px] w-[72px]" className="justify-center text-[16px] text-[#eef0f2]">MODEL</Box>
        <Box w="ml-[6px] w-[96px]">
          <BlueBtn><Ic w={26} h={26}><path d="M1 8 H25 M1 13 H25 M1 18 H25 M8 1 V25 M13 1 V25 M18 1 V25" stroke="#f0f0f0" /></Ic></BlueBtn>
          <div className="ml-[1px]"><BlueBtn><svg width="18" height="18" viewBox="0 0 18 18"><g fill="#f0f0f0"><rect x="1" y="1" width="3" height="3" /><rect x="8" y="1" width="3" height="3" /><rect x="15" y="1" width="3" height="3" /><rect x="1" y="8" width="3" height="3" /><rect x="8" y="8" width="3" height="3" /><rect x="15" y="8" width="3" height="3" /><rect x="1" y="15" width="3" height="3" /><rect x="8" y="15" width="3" height="3" /><rect x="15" y="15" width="3" height="3" /></g></svg></BlueBtn></div>
          <Arrow className="ml-[4px] scale-110" />
        </Box>
        <Box w="ml-[6px] w-[254px]">
          <Ic w={26} h={32} className="ml-[5px]"><path d="M1 0 V28 H26 M7 20 V28 H1" stroke={G} /><path d="M1 20 H7" stroke={G} /></Ic>
          <Ic w={28} h={28} className="ml-[10px]"><circle cx="12" cy="15" r="12" stroke={G} /><path d="M12 15 L22 1 M0 15 H24" stroke={G} /></Ic>
          <Arrow className="ml-[3px]" />
          <Ic w={20} h={30} className="ml-[12px]"><path d="M4 0 L18 30" stroke="#dc5b4f" /><path d="M10 2 V20" stroke={G} /><path d="M4 15 L16 15" stroke={G} strokeDasharray="2 2" /></Ic>
          <Arrow className="ml-[9px]" />
          <div className="ml-[25px]"><BlueBtn><Ic w={28} h={28}><path d="M1 26 H27 M1 26 L22 4" stroke="#f0f0f0" strokeWidth="1.5" /></Ic></BlueBtn></div>
          <div className="ml-[1px]"><BlueBtn><Ic w={28} h={28}><rect x="6" y="3" width="20" height="22" stroke="#f0f0f0" /><rect x="3" y="1" width="6" height="6" fill="#5d8abf" stroke="#f0f0f0" /></Ic></BlueBtn></div>
          <Arrow className="ml-[6px]" />
        </Box>
        <Box w="ml-[6px] w-[158px]">
          <BlueBtn>{annoIcon("#f0f0f0", <circle cx="22" cy="8" r="3.5" stroke="#f0f0f0" />)}</BlueBtn>
          <div className="ml-[5px]">{annoIcon(G, <path d="M22 2 L18 10 H23 L19 18" stroke={G} />)}</div>
          <div className="ml-[2px]">{annoIcon(G, null)}</div>
          <span className="ml-[3px] text-[15px] text-[#eef0f2]">1:1</span>
          <Arrow className="ml-[3px]" />
        </Box>
        <Box w="ml-[6px] w-[59px]">
          <svg width="26" height="30" viewBox="0 0 26 30" className="ml-[6px]"><path d="M13 3 V27 M3 9 L23 21 M3 21 L23 9" stroke={G} strokeWidth="5" /><circle cx="13" cy="15" r="9" fill={G} /><circle cx="13" cy="15" r="4" fill="#3b4453" /></svg>
          <Arrow className="ml-[6px]" />
        </Box>
        <Box w="ml-[3px] w-[35px]" className="justify-center"><Ic w={24} h={30}><rect x="11" y="0" width="2" height="30" fill={G} /><rect x="0" y="14" width="24" height="2" fill={G} /></Ic></Box>
        <Box w="ml-[7px] w-[146px]" className="text-[16px] text-[#eef0f2]">
          <Ic w={14} h={30} className="ml-[13px]"><rect x="0" y="0" width="14" height="30" fill={G} /><path d="M14 4 H9 M14 9 H9 M14 14 H9 M14 19 H9 M14 24 H9" stroke="#3b4453" /></Ic>
          <span className="ml-[20px]">Decimal</span>
          <Arrow className="ml-[21px]" />
        </Box>
        <Box w="ml-[6px] w-[36px]" className="justify-center"><Ic w={24} h={30}><rect x="6" y="1" width="8" height="12" stroke={G} /><circle cx="18" cy="10" r="5" stroke={G} /><polygon points="8,18 14,29 2,29" stroke={G} /></Ic></Box>
        <Box w="ml-[4px] w-[84px]">
          <Ic w={36} h={36} className="ml-[3px]"><polygon points="17,0 35,12 35,36 1,36 1,12" fill="#3f6ea5" /><rect x="1" y="22" width="14" height="14" fill="#e8b04a" /><path d="M14 26 L22 36 L33 18" stroke="#54c26f" strokeWidth="4" /></Ic>
          <Ic w={30} h={30} className="ml-[8px]"><path d="M12 4 A11 11 0 1 1 6 22" stroke={G} /><rect x="1" y="8" width="13" height="17" fill="#8a97a8" stroke={G} /><circle cx="21" cy="23" r="6" fill={B} /></Ic>
        </Box>
        <Box w="ml-[4px] w-[35px]" className="justify-center"><Ic w={24} h={24}><rect x="1" y="1" width="22" height="22" stroke={G} /><path d="M5 18 L9 14 M5 14 V18 H9 M19 6 L15 10 M19 10 V6 H15" stroke={G} /></Ic></Box>
        <Box w="ml-[5px] w-[35px]" className="justify-center"><Ic w={26} h={22}><rect x="0" y="0" width="26" height="4" fill={G} /><rect x="0" y="9" width="26" height="4" fill={G} /><rect x="0" y="18" width="26" height="4" fill={G} /></Ic></Box>
      </div>
    </div>
  )
}

export default function App() {
  return (
    <div className="relative flex h-[2089px] w-[3835px] flex-col overflow-hidden bg-[#3b4453] font-['Open_Sans',sans-serif]">
      <TitleBar />
      <Tabs />
      <Ribbon />
      <div className="h-[2px] bg-[#232a35]" />
      <div className="h-[6px] bg-[#3b4453]" />
      <div className="flex h-[1810px]">
        <div className="w-[862px] pt-[3px]">
          <BlocksPanel />
          <PropertiesPalette />
        </div>
        <div className="relative h-[1804px] w-[2973px] bg-[#212830]">
          <Canvas />
          <div className="absolute right-[11px] top-[15px] flex items-center gap-[14px]">
            <Ic w={16} h={16}><rect x="0" y="8" width="16" height="6" fill="#e6e6e6" stroke="#111" /></Ic>
            <Ic w={16} h={16}><rect x="1" y="4" width="10" height="11" stroke="#e6e6e6" strokeWidth="3" /><path d="M5 1 H15 V11" stroke="#e6e6e6" strokeWidth="1.5" /></Ic>
            <Ic w={16} h={16}><path d="M2 2 L14 14 M14 2 L2 14" stroke="#e6e6e6" strokeWidth="4" /></Ic>
          </div>
          <NavBar />
        </div>
      </div>
      <StatusBar />
      <CommandLine />
      <div className="absolute left-[529px] top-[430px] h-[339px] w-[355px] border-2 border-[#7d7d7d] bg-[#f1f2f7] text-[17px] text-[#4a515c]">
        <div className="ml-[49px] mt-[6px] flex h-[252px] w-[252px] items-center justify-center bg-[#3b4453]">
          <Ic w={170} h={106}>
            <rect x="1.5" y="1.5" width="167" height="103" stroke="#f2f2f2" strokeWidth="2" />
            <rect x="3" y="3" width="148" height="100" stroke="#f2f2f2" strokeWidth="1.5" />
            <rect x="151" y="3" width="17" height="100" fill="#f2f2f2" />
            <rect x="154" y="6" width="12" height="19" fill="#3b4453" />
            <path d="M156 42 V68 M156 72 V90 M163 42 V68 M163 72 V90" stroke="#3b4453" strokeWidth="1.5" />
            <path d="M152 95 H165" stroke="#3b4453" />
          </Ic>
        </div>
        <div className="ml-[9px] mt-[1px] flex flex-col leading-[24px]">
          <span className="whitespace-nowrap">Block Name: TitleBlock-11x17-Landscape2</span>
          <span>Annotative: No</span>
          <span>Dynamic: No</span>
        </div>
      </div>
    </div>
  )
}
